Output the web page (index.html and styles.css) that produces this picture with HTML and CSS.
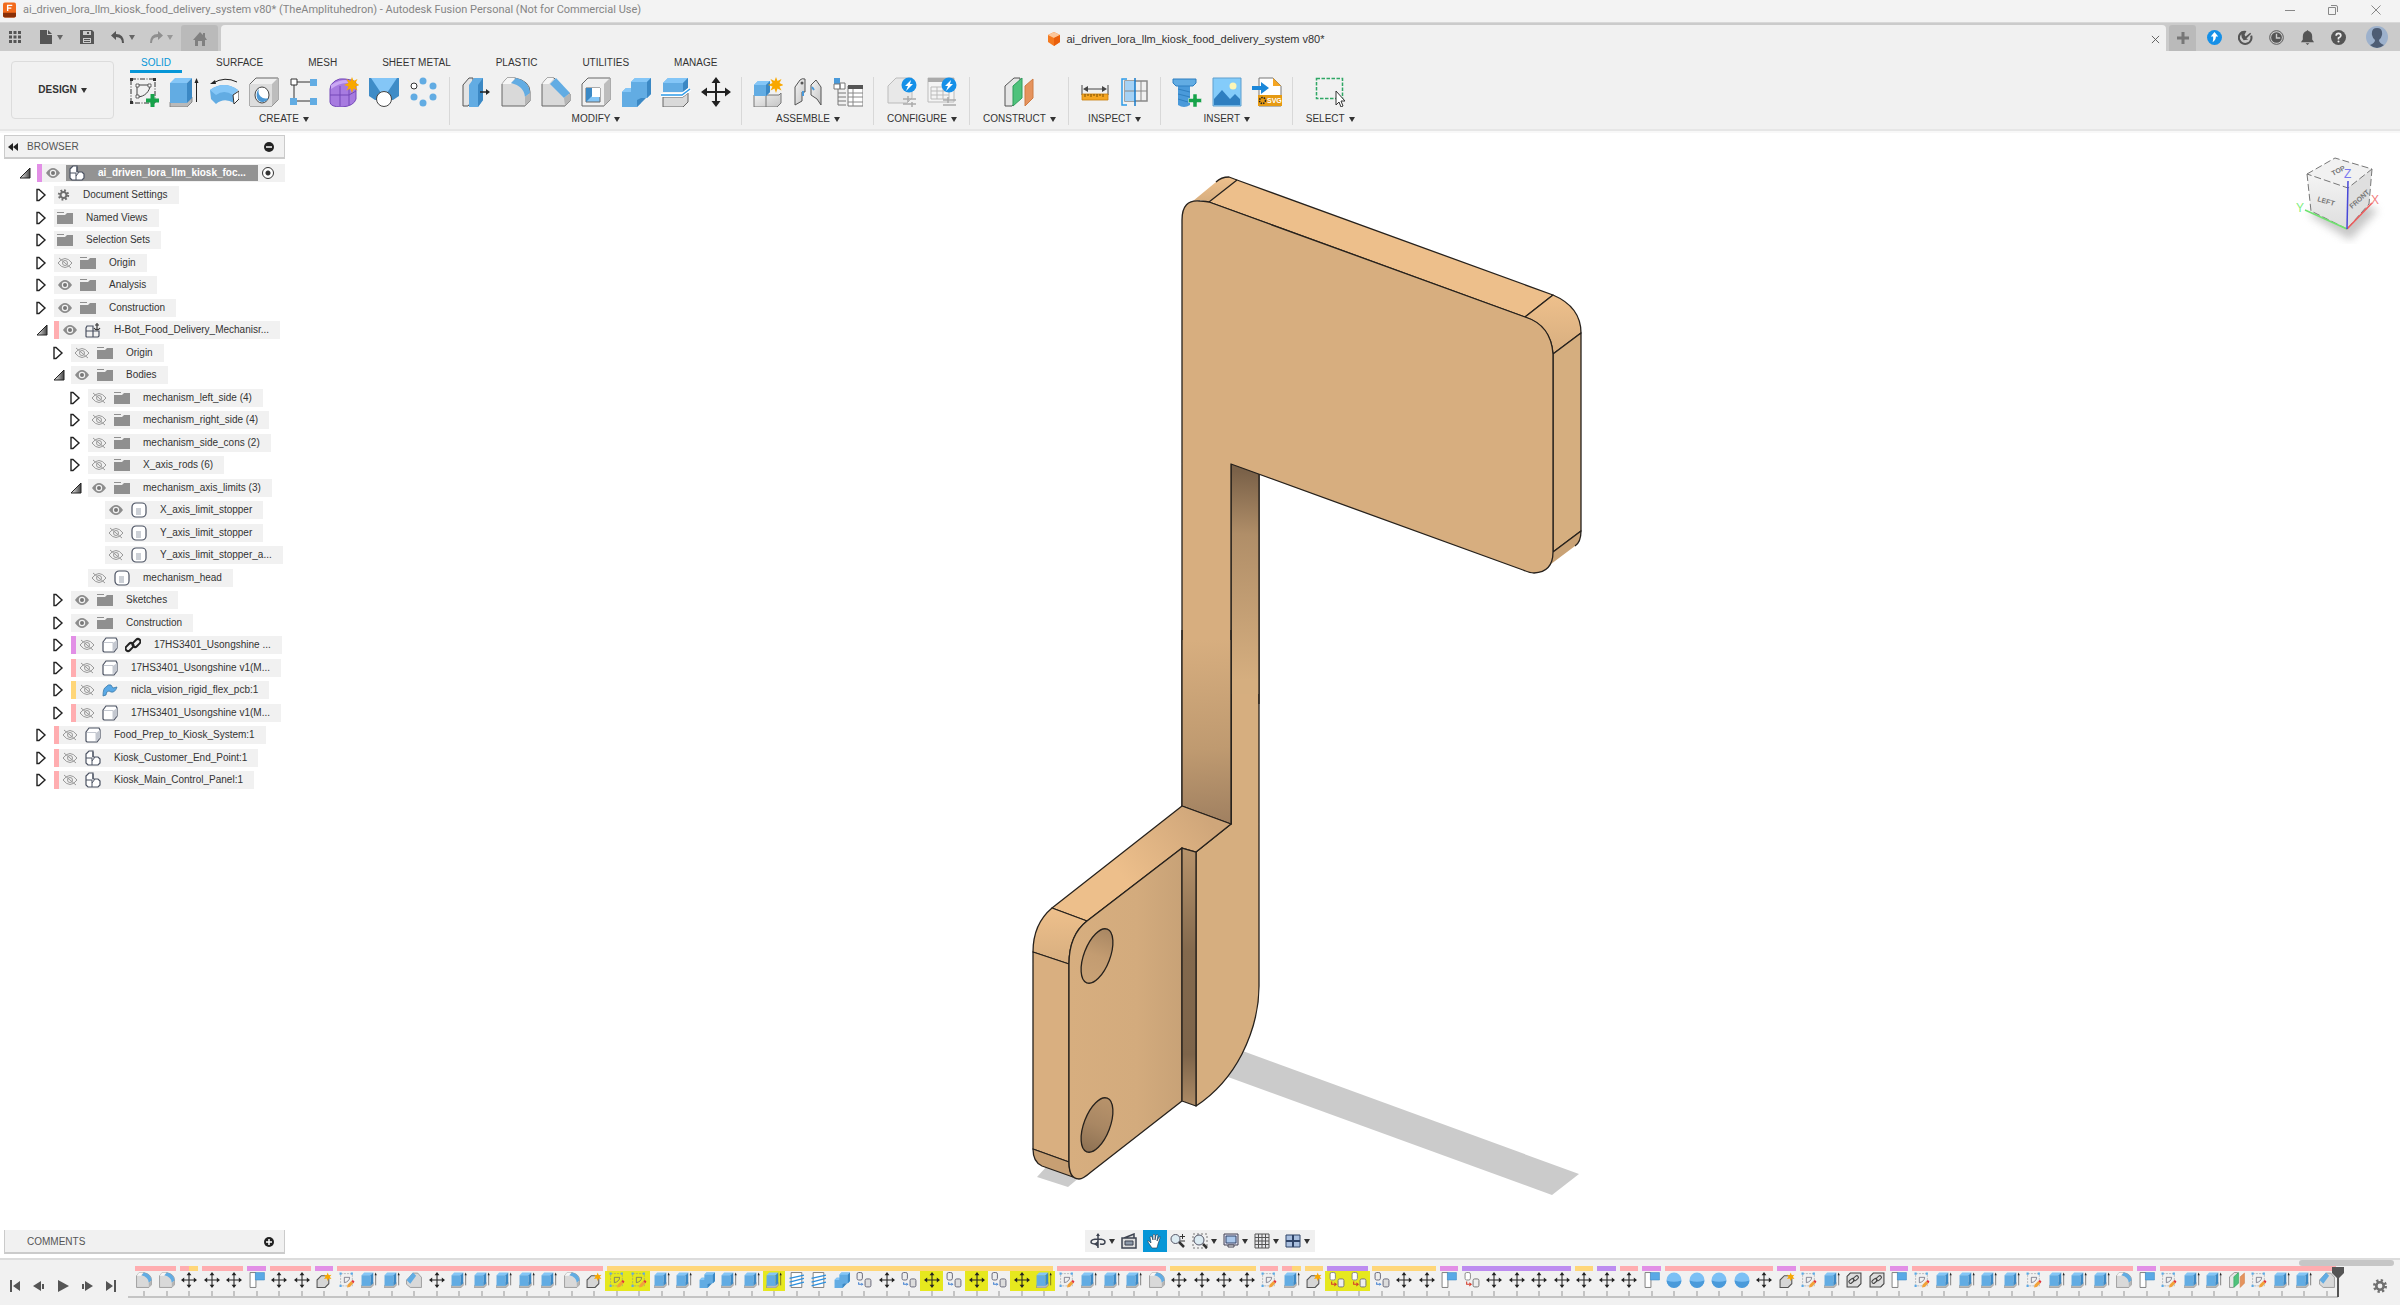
FILE: index.html
```html
<!DOCTYPE html>
<html lang="en">
<head>
	<meta charset="utf-8">
	<title>ai_driven_lora_llm_kiosk_food_delivery_system v80*</title>
	<link rel="stylesheet" href="styles.css">
</head>
<body>

<svg class="sprite" aria-hidden="true">
	<defs>
		<linearGradient id="gBlue" x1="0" y1="0" x2="1" y2="1"><stop offset="0" stop-color="#7dbdf0"/><stop offset="1" stop-color="#4a9ada"/></linearGradient>
		<linearGradient id="gGrey" x1="0" y1="0" x2="1" y2="1"><stop offset="0" stop-color="#f4f4f4"/><stop offset="1" stop-color="#c4c4c4"/></linearGradient>
		<linearGradient id="gOpen" x1="0" y1="0" x2="1" y2="0"><stop offset="0" stop-color="#f4f4f4"/><stop offset="1" stop-color="#444"/></linearGradient>
	</defs>

	<!-- ribbon -->
	<symbol id="i-sketch" viewBox="0 0 30 30">
		<path d="M2 2h24v24H2z" fill="none" stroke="#333" stroke-width="1" stroke-dasharray="5 1.5 1 1.5"/>
		<path d="M1 1h3v3H1zM24 1h3v3h-3zM1 24h3v3H1z" fill="#333"/>
		<path d="M8 20V8h13c0 6-5 12-13 12z" fill="none" stroke="#444"/>
		<path d="M7 7h3v3H7zM19 7h3v3h-3zM7 18h3v3H7z" fill="#fff" stroke="#444" stroke-width=".8"/>
		<path d="M21.500 17h4v4.500H30v4h-4.500V30h-4v-4.500H17v-4h4.500z" fill="#16a34a"/>
	</symbol>
	<symbol id="i-sketchedit" viewBox="0 0 30 30">
		<path d="M3 3h22v23H3z" fill="none" stroke="#8a8f98" stroke-dasharray="4 2"/>
		<path d="M1 1h4v4H1zM22 1h4v4h-4zM1 24h4v4H1z" fill="#5aa9e6"/>
		<path d="M10 20V10h10c0 5-4 9-10 10z" fill="none" stroke="#667" stroke-width="1.400"/>
		<path d="M15 29l1-5 7-7 4 4-7 7z" fill="#f2a33a"/><path d="M23 17l3-2 3 3-2 3z" fill="#e0333c"/>
	</symbol>
	<symbol id="i-extrude" viewBox="0 0 30 30">
		<path d="M1 25l5-5h17v5l-5 5H1z" fill="#b9b9b9" stroke="#777" stroke-width=".8"/>
		<path d="M1 6l5-5h17l-5 5z" fill="#84c6f7"/><path d="M1 6h17v20H1z" fill="#62ace3"/><path d="M18 6l5-5v20l-5 5z" fill="#3b88c4"/>
		<path d="M27.500 25V4" stroke="#222" fill="none"/><path d="M25.500 6l2-5 2 5z" fill="#222"/>
	</symbol>
	<symbol id="i-revolve" viewBox="0 0 30 30">
		<path d="M1 13Q15 3 29 13l-5 5 1 8Q15 20 7 27l-5-5z" fill="#62ace3"/>
		<path d="M1 13Q15 3 29 13l-5 5Q15 12 7 18z" fill="#84c6f7"/>
		<path d="M24 18l6-4v8l-5 5z" fill="#fff" stroke="#333"/>
		<path d="M4 6Q16-1 28 5" fill="none" stroke="#222"/><path d="M1 7l5-4 1 4z" fill="#222"/>
	</symbol>
	<symbol id="i-hole" viewBox="0 0 30 30">
		<path d="M1 7l6-6h22v22l-6 6H1z" fill="#f0f0f0" stroke="#666"/><path d="M1 7h22v22H1z" fill="#ddd"/><path d="M23 7l6-6v22l-6 6z" fill="#bdbdbd"/>
		<ellipse cx="13" cy="18" rx="7" ry="8" fill="#fff" stroke="#444"/><path d="M10 12a7 7 0 0 0 9 9c0 2-3 4-6 4-6 0-7-10-3-13z" fill="#4c98d4"/>
	</symbol>
	<symbol id="i-rect" viewBox="0 0 30 30">
		<path d="M8 5h13M5 8v13M8 24h13" stroke="#333"/><path d="M2 2h6v6H2z" fill="#fff" stroke="#333"/>
		<path d="M21 2h7v7h-7zM1 21h7v7H1zM21 21h7v7h-7z" fill="#62ace3"/>
	</symbol>
	<symbol id="i-form" viewBox="0 0 30 30">
		<path d="M1 12q0-5 5-8 4-3 10-2 10 1 11 4v16q-2 7-14 8Q1 30 1 25z" fill="#a77be0" stroke="#7448b8"/>
		<path d="M2 8q8-5 15-5l3 3q-9-1-18 6z" fill="#caa8f3"/><path d="M1 18h19l7-4M11 9v20M20 8v20" fill="none" stroke="#7448b8"/>
		<path d="M23 0l1.500 4 4-2-2 4 4 2-4 1.500 2 4-4-2L23 16l-1.500-4.500-4 2 2-4L15 8l4.500-2-2-4 4 2z" fill="#f9a800"/>
	</symbol>
	<symbol id="i-loft" viewBox="0 0 30 30">
		<path d="M0 1h30v19l-7 3H7l-7-3z" fill="#f1f1f1"/><path d="M0 1h30v18l-6 4H6l-6-4z" fill="#3f8cc7"/><path d="M2 1h26L18 16h-6z" fill="#84c6f7"/><circle cx="15" cy="22" r="7.500" fill="#fff" stroke="#444"/>
	</symbol>
	<symbol id="i-circ" viewBox="0 0 30 30">
		<circle cx="5" cy="9" r="3" fill="#fff" stroke="#333"/><g fill="#62ace3"><circle cx="14" cy="4" r="3.500"/><circle cx="24" cy="9" r="3.500"/><circle cx="24" cy="20" r="3.500"/><circle cx="14" cy="26" r="3.500"/><circle cx="5" cy="20" r="3.500"/></g>
	</symbol>
	<symbol id="i-presspull" viewBox="0 0 30 30">
		<path d="M2 8l6-7h4v22l-5 6H2z" fill="#e4e4e4" stroke="#555"/><path d="M8 8l5-7h9v22l-5 7H8z" fill="#62ace3"/><path d="M17 8l5-7v22l-5 7z" fill="#3b88c4"/>
		<path d="M19 15h7" stroke="#222" stroke-width="1.500"/><path d="M25 12l4 3-4 3z" fill="#222"/>
	</symbol>
	<symbol id="i-fillet" viewBox="0 0 30 30">
		<path d="M1 29V7l5-6h8q15 3 15 14v9l-5 5z" fill="#d9d9d9" stroke="#666"/><path d="M1 7l5-6h8l-4 6z" fill="#f6f6f6"/>
		<path d="M10 6l5-5q13 3 14 15l-5 4Q23 9 10 6z" fill="#62ace3"/><path d="M24 20l5-4v8l-5 5z" fill="#b5b5b5"/>
	</symbol>
	<symbol id="i-chamfer" viewBox="0 0 30 30">
		<path d="M1 29V7l5-6h7l16 16v7l-5 5z" fill="#d9d9d9" stroke="#666"/><path d="M1 7l5-6h7l-5 6z" fill="#f6f6f6"/>
		<path d="M9 7l6-6 14 15-6 5z" fill="#62ace3"/><path d="M23 21l6-5v8l-5 5z" fill="#b5b5b5"/>
	</symbol>
	<symbol id="i-chamfer2" viewBox="0 0 30 30">
		<path d="M1 15L13 2h9l7 8v19H8l-7-6z" fill="#d9d9d9" stroke="#666"/><path d="M1 15L13 1l6 6L8 22z" fill="#62ace3"/>
	</symbol>
	<symbol id="i-shell" viewBox="0 0 30 30">
		<path d="M1 7l6-6h22v22l-6 6H1z" fill="#f0f0f0" stroke="#666"/><path d="M23 7l6-6v22l-6 6z" fill="#bdbdbd"/><path d="M5 11h14v14H5z" fill="#84c6f7" stroke="#666"/><path d="M5 11h6v8l-6 6z" fill="#3b88c4"/><path d="M11 11h8v9h-8z" fill="#fff"/>
	</symbol>
	<symbol id="i-combine" viewBox="0 0 30 30">
		<path d="M1 15l4-4h5V5l4-4h16v16l-4 4h-6v5l-4 4H1z" fill="#62ace3"/><path d="M10 5l4-4h16l-4 4zM1 15l4-4h5v4z" fill="#84c6f7"/><path d="M26 5l4-4v16l-4 4zM20 21h5l-5 5-4 4v-7z" fill="#3b88c4"/>
	</symbol>
	<symbol id="i-split" viewBox="0 0 30 30">
		<path d="M2 6l5-5h20v10l-5 4H2z" fill="#62ace3"/><path d="M2 6l5-5h20l-5 5z" fill="#84c6f7"/><path d="M22 6l5-5v10l-5 4z" fill="#3b88c4"/>
		<path d="M2 20h20l5-4v9l-5 5H2z" fill="#d9d9d9" stroke="#666"/><path d="M0 18h21l8-6" fill="none" stroke="#fff" stroke-width="4"/><path d="M0 18h21l8-6" fill="none" stroke="#2d9be8" stroke-width="1.500"/>
	</symbol>
	<symbol id="i-move" viewBox="0 0 30 30">
		<path d="M15 4v22M4 15h22" stroke="#222" stroke-width="2"/><path d="M15 0l4.500 6h-9zM15 30l4.500-6h-9zM0 15l6-4.500v9zM30 15l-6-4.500v9z" fill="#222"/>
	</symbol>
	<symbol id="i-newcomp" viewBox="0 0 30 30">
		<path d="M1 18h25l2-2v10l-4 4H1z" fill="url(#gGrey)" stroke="#777"/><path d="M13 18v12" stroke="#777"/>
		<path d="M1 8l4-4h12v11l-4 4H1z" fill="#62ace3"/><path d="M1 8l4-4h12l-4 4z" fill="#84c6f7"/><path d="M13 8l4-4v11l-4 4z" fill="#3b88c4"/>
		<path d="M23 0l1.500 4 4-2-2 4 4 2-4 1.500 2 4-4-2L23 16l-1.500-4.500-4 2 2-4L15 8l4.500-2-2-4 4 2z" fill="#f9a800"/>
	</symbol>
	<symbol id="i-jointr" viewBox="0 0 30 30">
		<path d="M2 28V10l5-7q2-2 5-1v13H9v9z" fill="url(#gGrey)" stroke="#555"/><path d="M28 28V10l-5-7-5 5v10l6 4z" fill="url(#gGrey)" stroke="#555"/>
		<circle cx="9" cy="6" r="1.500" fill="#555"/><path d="M10 14v5M19 10l2 3" stroke="#4a9ada" stroke-width="2"/>
	</symbol>
	<symbol id="i-bom" viewBox="0 0 30 30">
		<path d="M5 12v16h8M5 16h8M5 20h8M5 24h8" fill="none" stroke="#777"/><path d="M1 1h6v6H1z" fill="#4a9ada"/><path d="M1 7h6v5H1zM7 6h5v6H7z" fill="#fff" stroke="#777"/>
		<path d="M15 9h15v20H15z" fill="#fff" stroke="#777"/><path d="M15 8h15v4H15z" fill="#555"/><path d="M15 16h15M15 20h15M15 25h15M20 12v17" stroke="#888"/>
	</symbol>
	<symbol id="i-conf" viewBox="0 0 30 30">
		<path d="M1 9l8-8h16v20l-5 5H1z" fill="#e8e8e8" stroke="#bbb"/><path d="M16 22h13M16 27h13M21 19v6M25 25v5" stroke="#aaa" stroke-width="1.500"/>
		<circle cx="22" cy="8" r="7.500" fill="#1590e8"/><path d="M24 3l-6 6h3l-2 5 7-7h-3z" fill="#fff"/>
	</symbol>
	<symbol id="i-conftable" viewBox="0 0 30 30">
		<path d="M1 1h26v24H1z" fill="#f4f4f4" stroke="#bbb"/><path d="M1 1h26v4H1z" fill="#aaa"/><path d="M4 10h18v12H4zM4 14h18M4 18h18M10 10v12M16 10v12" fill="none" stroke="#bbb"/>
		<path d="M16 23h13M16 28h13M21 20v6" stroke="#aaa" stroke-width="1.500"/>
		<circle cx="22" cy="8" r="7.500" fill="#1590e8"/><path d="M24 3l-6 6h3l-2 5 7-7h-3z" fill="#fff"/>
	</symbol>
	<symbol id="i-plane" viewBox="0 0 30 30">
		<path d="M1 9l9-8h6v19l-8 9H1z" fill="#e6e6e6" stroke="#555"/><path d="M9 9l9-8v20l-9 8z" fill="#4fc27c" stroke="#2e9e5b"/><path d="M21 9l8-7v19l-8 8z" fill="#e5935d" stroke="#cf7a42"/>
	</symbol>
	<symbol id="i-measure" viewBox="0 0 30 30">
		<path d="M2 8v10M28 8v10" stroke="#444"/><path d="M5 12h20" stroke="#444"/><path d="M3 12l5-3v6zM27 12l-5-3v6z" fill="#444"/>
		<path d="M2 17h26v6H2z" fill="#f5a623" stroke="#c97f0a" stroke-width=".8"/><path d="M5 17v3M8 17v2M11 17v3M14 17v2M17 17v3M20 17v2M23 17v3" stroke="#7a4d00"/>
	</symbol>
	<symbol id="i-section" viewBox="0 0 30 30">
		<path d="M5 4h22v20H5z" fill="#f0f0f0" stroke="#888" stroke-width="1.500"/><path d="M5 4h10v20H5z" fill="#a5d2f5"/><path d="M5 14h22M21 4v20" stroke="#888"/>
		<path d="M7 2H2v26h5" fill="none" stroke="#2d9be8" stroke-width="1.500"/><path d="M15 1v28" stroke="#1478c8" stroke-width="1.500"/>
	</symbol>
	<symbol id="i-bolt" viewBox="0 0 30 30">
		<path d="M6 6h12v22q-6 4-12 0z" fill="#4a9ada"/><path d="M1 2h23v4l-3 3H4L1 6z" fill="#62ace3" stroke="#2f7fc0"/><path d="M6 12l12 3M6 17l12 3M6 22l10 3" stroke="#2f7fc0"/>
		<path d="M21 17h4v4.500h4.500v4H25V30h-4v-4.500h-4.500v-4H21z" fill="#16a34a" stroke="#f1f1f1" stroke-width=".5"/>
	</symbol>
	<symbol id="i-canvas" viewBox="0 0 30 30">
		<path d="M1 1h28v28H1z" fill="#84ccfa" stroke="#5f9fce"/><path d="M2 22l8-9 8 9 5-5 5 5v6H2z" fill="#2f7fc0"/><circle cx="21" cy="9" r="3.500" fill="#fdf6b8"/>
	</symbol>
	<symbol id="i-select" viewBox="0 0 30 30">
		<path d="M1.500 1.500h26v20h-26z" fill="none" stroke="#2fa765" stroke-width="1.500" stroke-dasharray="3.500 1.500"/><path d="M21 14v14l3-3 2 5 2-1-2-5h4z" fill="#fff" stroke="#333"/>
	</symbol>

	<!-- timeline only -->
	<symbol id="i-joint" viewBox="0 0 30 30"><path d="M2 1h11v28H2z" fill="#fff" stroke="#666" stroke-width="1.500"/><path d="M12 1h17v14H12z" fill="#5aa9e6" stroke="#3b88c4"/></symbol>
	<symbol id="i-comp" viewBox="0 0 30 30"><path d="M2 15l8-8h14v15l-7 7H2z" fill="#d6d6d6" stroke="#555" stroke-width="2"/><path d="M22 1l2 5 5-1-3 4 3 4-5-1-2 5-2-5-5 1 3-4-3-4 5 1z" fill="#f9a800"/></symbol>
	<symbol id="i-thread" viewBox="0 0 30 30"><path d="M4 1h20v28H4z" fill="#fff" stroke="#666" stroke-width="1.500"/><path d="M1 12l27-6M1 19l27-7M1 26l27-7" stroke="#2d8fdc" stroke-width="2.500"/></symbol>
	<symbol id="i-copy" viewBox="0 0 30 30"><rect x="2" y="1" width="10" height="14" rx="3" fill="#eee" stroke="#667" stroke-width="1.800"/><rect x="17" y="13" width="11" height="15" rx="3" fill="#ddd" stroke="#667" stroke-width="1.800"/><path d="M5 19v4h5" fill="none" stroke="#3f7fd0" stroke-width="2"/><path d="M10 20l4 3-4 3z" fill="#3f7fd0"/></symbol>
	<symbol id="i-copyred" viewBox="0 0 30 30"><rect x="2" y="1" width="10" height="14" rx="3" fill="#fff" stroke="#888" stroke-width="1.800"/><rect x="17" y="13" width="11" height="15" rx="3" fill="#eee" stroke="#777" stroke-width="1.800"/><path d="M5 18v5h5" fill="none" stroke="#d43a2a" stroke-width="2"/><path d="M10 19l5 4-5 4z" fill="#d43a2a"/></symbol>
	<symbol id="i-sphere" viewBox="0 0 30 30"><circle cx="15" cy="15" r="14" fill="#7cc0f5"/><path d="M1 16q14 5 28 0a14 14 0 0 1-28 0z" fill="#4a9ada"/></symbol>
	<symbol id="i-linkbox" viewBox="0 0 30 30"><path d="M2 8l6-6h20v20l-6 6H2z" fill="#ddd" stroke="#444" stroke-width="2"/><g fill="none" stroke="#444" stroke-width="2"><rect x="5" y="14" width="11" height="6" rx="3" transform="rotate(-40 10 17)"/><rect x="13" y="9" width="11" height="6" rx="3" transform="rotate(-40 18 12)"/></g></symbol>

	<!-- browser tree -->
	<symbol id="i-eye" viewBox="0 0 16 16"><path d="M1 8q7-10 14 0-7 10-14 0z" fill="#8c8c8c"/><circle cx="8" cy="8" r="3.200" fill="#f1f1f1"/><circle cx="8" cy="8" r="2" fill="#777"/></symbol>
	<symbol id="i-eyeoff" viewBox="0 0 16 16"><path d="M1 8q7-9 14 0-7 9-14 0z" fill="none" stroke="#999"/><circle cx="8" cy="8" r="2.500" fill="none" stroke="#999"/><path d="M2 3l12 10" stroke="#999"/></symbol>
	<symbol id="i-folder" viewBox="0 0 16 16"><path d="M0 5h8l2-2h6v11H0zM0 2h7v1H0z" fill="#8f8f8f"/></symbol>
	<symbol id="i-gear" viewBox="0 0 16 16"><circle cx="8" cy="8" r="5.500" fill="none" stroke="#707070" stroke-width="3" stroke-dasharray="2.160 2.160"/><circle cx="8" cy="8" r="3.700" fill="none" stroke="#707070" stroke-width="2.600"/></symbol>
	<symbol id="i-body" viewBox="0 0 16 16"><rect x="1" y="1" width="14" height="14" rx="4" fill="#fff" stroke="#4b5262" stroke-width="1.200"/><path d="M5 6h5v7H5z" fill="#ccd0d6"/></symbol>
	<symbol id="i-cube" viewBox="0 0 16 16"><path d="M1 5l3-4h10l1 2v8l-3 4H2l-1-1z" fill="#fff" stroke="#4b5262" stroke-width="1.200"/><path d="M11 6l4-3v8l-4 3z" fill="#c4c8d0"/><path d="M2 5.500h9V14" fill="none" stroke="#c4c8d0"/></symbol>
	<symbol id="i-asm" viewBox="0 0 16 16"><path d="M1 4l3-3h4v6h5l2 2v4l-2 2H3l-2-2z" fill="#fff" stroke="#4b5262" stroke-width="1.200"/><path d="M1 8h6v7M7 11l3-4M8 2v5" fill="none" stroke="#4b5262"/></symbol>
	<symbol id="i-anchor" viewBox="0 0 16 16"><path d="M2 4h6v11H2q-1 0-1-1V6zM8 9h6v5l-1 1H8M1 9h7" fill="none" stroke="#4b5262" stroke-width="1.200"/><path d="M12 1v7M10 3h4M9 6q3 4 6 0" fill="none" stroke="#333" stroke-width="1.200"/></symbol>
	<symbol id="i-link" viewBox="0 0 16 16"><g fill="none" stroke="#222" stroke-width="2"><rect x="0" y="7.500" width="9" height="5" rx="2.500" transform="rotate(-45 4.500 10)"/><rect x="7" y="3.500" width="9" height="5" rx="2.500" transform="rotate(-45 11.500 6)"/></g></symbol>
	<symbol id="i-pcb" viewBox="0 0 16 16"><path d="M1 14q0-8 3-9 2-3 5-2l2 3 4-1q-2 6-6 5L7 9q-3 0-3 4z" fill="#5aa9e6" stroke="#3878a8" stroke-width=".8"/></symbol>
	<symbol id="i-closed" viewBox="1 0 12 14"><path d="M2 1.500h2L10 7l-6 5.500H2z" fill="#fff" stroke="#222" stroke-width="1.400"/></symbol>
	<symbol id="i-open" viewBox="0 0 12 14"><path d="M1 12L11 2v10z" fill="url(#gOpen)" stroke="#222"/></symbol>
</svg>

<header class="titlebar">
	<svg class="app-icon" viewBox="0 0 14 16"><rect width="14" height="16" rx="2" fill="#f26a1b"/><path d="M0 11h14v3a2 2 0 0 1-2 2H2a2 2 0 0 1-2-2z" fill="#8a2f06"/><path d="M5 9V3h5M5 6h4" fill="none" stroke="#fff" stroke-width="1.500"/></svg>
	<h1>ai_driven_lora_llm_kiosk_food_delivery_system v80* (TheAmplituhedron) - Autodesk Fusion Personal (Not for Commercial Use)</h1>
	<div class="window-buttons">
		<button aria-label="Minimize"><svg viewBox="0 0 12 12"><path d="M1 6.500h10"/></svg></button>
		<button aria-label="Restore"><svg viewBox="0 0 12 12"><path d="M1.500 3.500h7v7h-7zM4 1.500h5q1.500 0 1.500 1.500v5"/></svg></button>
		<button aria-label="Close"><svg viewBox="0 0 12 12"><path d="M1.500 1.500l9 9M10.500 1.500l-9 9"/></svg></button>
	</div>
</header>

<div class="tabstrip">
	<div class="quick">
		<button aria-label="Data panel"><svg viewBox="0 0 14 14"><path d="M1 1h3v3H1zM5.500 1h3v3h-3zM10 1h3v3h-3zM1 5.500h3v3H1zM5.500 5.500h3v3h-3zM10 5.500h3v3h-3zM1 10h3v3H1zM5.500 10h3v3h-3zM10 10h3v3h-3z"/></svg></button>
		<button class="caret" aria-label="File"><svg viewBox="0 0 14 14"><path d="M1 0h7v5h5v9H1zM9 0l4 4H9z"/></svg></button>
		<button aria-label="Save"><svg viewBox="0 0 14 14"><path fill-rule="evenodd" d="M0 0h12l2 2v12H0zM3 1v4h8V1zM3 8v5h8V8zM7 2h2v2H7zM4 9h6v1H4zM4 11h6v1H4z"/></svg></button>
		<button class="caret" aria-label="Undo"><svg viewBox="0 0 14 14"><path d="M5 1v3q8 0 8 9h-2q0-6-6-6v3L0 5.500z"/></svg></button>
		<button class="caret redo" aria-label="Redo"><svg viewBox="0 0 14 14"><path d="M9 1v3Q1 4 1 13h2q0-6 6-6v3l5-4.500z"/></svg></button>
	</div>
	<button class="home" aria-label="Home"><svg viewBox="0 0 14 14"><path d="M7 0l3 3V1h2v4l2 3h-2v6H9V9H5v5H2V8H0z"/></svg></button>
	<div class="doc-tab">
		<svg viewBox="0 0 14 14"><path d="M7 0l6 3v7l-6 4-6-4V3z" fill="#f47a20"/><path d="M7 0l6 3-6 3-6-3z" fill="#fcc79b"/><path d="M7 6l6-3v7l-6 4z" fill="#ea5f0c"/></svg>
		<span>ai_driven_lora_llm_kiosk_food_delivery_system v80*</span>
		<button class="close" aria-label="Close tab"><svg viewBox="0 0 10 10"><path d="M1 1l8 8M9 1L1 9"/></svg></button>
	</div>
	<button class="new-tab" aria-label="New design"><svg viewBox="0 0 14 14"><path d="M7 1v12M1 7h12"/></svg></button>
	<div class="account">
		<button aria-label="Updates"><svg viewBox="0 0 16 16"><circle cx="8" cy="8" r="8" fill="#1590e8"/><path d="M8 2l4 5H9.500q0 4-3.500 6 1-3 .5-6H4z" fill="#fff"/></svg></button>
		<button aria-label="Extensions"><svg viewBox="0 0 16 16"><path d="M5 2a6.700 6.700 0 1 0 9 4" fill="none" stroke="#555" stroke-width="2.200"/><path d="M3 2q3-2 6-1L7 5l1 2 5-4 1 1-5 5 2 1-5 1-2-3z" fill="#555"/></svg></button>
		<button aria-label="Job status"><svg viewBox="0 0 16 16"><circle cx="8" cy="8" r="7.300" fill="none" stroke="#555"/><circle cx="8" cy="8" r="5.700" fill="#555"/><path d="M8 4v4.500h4" fill="none" stroke="#cbcbcb" stroke-width="1.500"/></svg></button>
		<button aria-label="Notifications"><svg viewBox="0 0 16 16"><path d="M8 0l1 1q4 1 4 6v3l2 3H1l2-3V7q0-5 4-6zM6 14h4l-2 2z" fill="#555"/></svg></button>
		<button aria-label="Help"><svg viewBox="0 0 16 16"><circle cx="8" cy="8" r="8" fill="#555"/><path d="M5.500 6q0-2.500 2.500-2.500T10.500 6Q10.500 7 8 8.500V10" fill="none" stroke="#eee" stroke-width="1.800"/><circle cx="8" cy="12.200" r="1.100" fill="#eee"/></svg></button>
		<button class="avatar" aria-label="Account"><svg viewBox="0 0 22 22"><circle cx="11" cy="11" r="11" fill="#9db1cc"/><path d="M11 2q6 0 5 7-1 4-3 5 0 3 5 5-7 6-14 0 5-2 5-5-2-1-3-5-1-7 5-7z" fill="#4e5d74"/></svg></button>
	</div>
</div>

<div class="ribbon">
	<button class="workspace caret">DESIGN</button>
	<div class="ribbon-main">
		<nav class="ribbon-tabs">
			<button class="active">SOLID</button>
			<button>SURFACE</button>
			<button>MESH</button>
			<button>SHEET METAL</button>
			<button>PLASTIC</button>
			<button>UTILITIES</button>
			<button>MANAGE</button>
		</nav>
		<div class="groups">
			<section>
				<div class="tools">
					<button aria-label="Create sketch"><svg><use href="#i-sketch"/></svg></button>
					<button aria-label="Extrude"><svg><use href="#i-extrude"/></svg></button>
					<button aria-label="Revolve"><svg><use href="#i-revolve"/></svg></button>
					<button aria-label="Hole"><svg><use href="#i-hole"/></svg></button>
					<button aria-label="Rectangular pattern"><svg><use href="#i-rect"/></svg></button>
					<button aria-label="Create form"><svg><use href="#i-form"/></svg></button>
					<button aria-label="Loft"><svg><use href="#i-loft"/></svg></button>
					<button aria-label="Circular pattern"><svg><use href="#i-circ"/></svg></button>
				</div>
				<button class="group-label caret">CREATE</button>
			</section>
			<section>
				<div class="tools">
					<button aria-label="Press pull"><svg><use href="#i-presspull"/></svg></button>
					<button aria-label="Fillet"><svg><use href="#i-fillet"/></svg></button>
					<button aria-label="Chamfer"><svg><use href="#i-chamfer"/></svg></button>
					<button aria-label="Shell"><svg><use href="#i-shell"/></svg></button>
					<button aria-label="Combine"><svg><use href="#i-combine"/></svg></button>
					<button aria-label="Split body"><svg><use href="#i-split"/></svg></button>
					<button aria-label="Move"><svg><use href="#i-move"/></svg></button>
				</div>
				<button class="group-label caret">MODIFY</button>
			</section>
			<section>
				<div class="tools">
					<button aria-label="New component"><svg><use href="#i-newcomp"/></svg></button>
					<button aria-label="Joint"><svg><use href="#i-jointr"/></svg></button>
					<button aria-label="Bill of materials"><svg><use href="#i-bom"/></svg></button>
				</div>
				<button class="group-label caret">ASSEMBLE</button>
			</section>
			<section>
				<div class="tools">
					<button aria-label="Configure"><svg><use href="#i-conf"/></svg></button>
					<button aria-label="Configuration table"><svg><use href="#i-conftable"/></svg></button>
				</div>
				<button class="group-label caret">CONFIGURE</button>
			</section>
			<section>
				<div class="tools">
					<button aria-label="Offset plane"><svg><use href="#i-plane"/></svg></button>
				</div>
				<button class="group-label caret">CONSTRUCT</button>
			</section>
			<section>
				<div class="tools">
					<button aria-label="Measure"><svg><use href="#i-measure"/></svg></button>
					<button aria-label="Section analysis"><svg><use href="#i-section"/></svg></button>
				</div>
				<button class="group-label caret">INSPECT</button>
			</section>
			<section>
				<div class="tools">
					<button aria-label="Insert fastener"><svg><use href="#i-bolt"/></svg></button>
					<button aria-label="Insert canvas"><svg><use href="#i-canvas"/></svg></button>
					<button aria-label="Insert SVG">
						<svg viewBox="0 0 30 30">
							<path d="M7 29V1h14l8 8v20z" fill="#fff" stroke="#777"/><path d="M21 1v8h8z" fill="#f5a623"/><path d="M6 18h24v11H6z" fill="#e69a12"/>
							<path d="M0 9h9V5l8 6-8 6v-4H0z" fill="#1b87d9"/><circle cx="10.500" cy="23.500" r="3" fill="none" stroke="#222" stroke-width="1.500" stroke-dasharray="1.500 1"/><text x="15" y="26" class="svg-tag">SVG</text>
						</svg>
					</button>
				</div>
				<button class="group-label caret">INSERT</button>
			</section>
			<section>
				<div class="tools">
					<button aria-label="Select"><svg><use href="#i-select"/></svg></button>
				</div>
				<button class="group-label caret">SELECT</button>
			</section>
		</div>
	</div>
</div>

<main class="viewport">
	<svg class="model" viewBox="0 131 2400 1127">
		<defs>
			<linearGradient id="mPost" gradientUnits="userSpaceOnUse" x1="1200" y1="640" x2="1212" y2="822"><stop offset="0" stop-color="#d7ae7f"/><stop offset=".6" stop-color="#bf9a70"/><stop offset="1" stop-color="#a18161"/></linearGradient>
			<linearGradient id="mUnder" gradientUnits="userSpaceOnUse" x1="1250" y1="472" x2="1238" y2="680"><stop offset="0" stop-color="#7b6249"/><stop offset=".3" stop-color="#b08e68"/><stop offset="1" stop-color="#d5ae7f"/></linearGradient>
			<linearGradient id="mTop" gradientUnits="userSpaceOnUse" x1="1205" y1="815" x2="1125" y2="880"><stop offset="0" stop-color="#cfa67a"/><stop offset="1" stop-color="#edbf8b"/></linearGradient>
			<linearGradient id="mNotch" x1="0" y1="0" x2="0" y2="1"><stop offset="0" stop-color="#b8946c"/><stop offset=".4" stop-color="#83694d"/><stop offset=".8" stop-color="#7d644a"/><stop offset="1" stop-color="#ae8c66"/></linearGradient>
			<linearGradient id="mFront" x1="0" y1="0" x2="1" y2="0"><stop offset="0" stop-color="#d7ae7f"/><stop offset=".6" stop-color="#d3ab7d"/><stop offset="1" stop-color="#c8a277"/></linearGradient>
			<linearGradient id="mCorner" x1="0" y1="0" x2="0" y2="1"><stop offset="0" stop-color="#eec08c"/><stop offset="1" stop-color="#d7ae7f"/></linearGradient>
			<linearGradient id="mHole" x1="0" y1="0" x2="0" y2="1"><stop offset="0" stop-color="#a98763"/><stop offset=".5" stop-color="#c39c71"/><stop offset="1" stop-color="#c9a276"/></linearGradient>
			<linearGradient id="mHole2" x1="0" y1="0" x2="0" y2="1"><stop offset="0" stop-color="#b8936b"/><stop offset=".5" stop-color="#a98763"/><stop offset="1" stop-color="#8d7153"/></linearGradient>
		</defs>
		<g fill="#cbcbcb">
			<path d="M1240 1050L1579 1174l-27 21-324-118z"/>
			<path d="M1037 1177l31 10 12-10-32-12z"/>
		</g>
		<g stroke="#26211c" stroke-width="1.300" stroke-linejoin="round">
			<!-- head -->
			<path d="M1193 201l23-19q5-5 13-5l8 3-28 22q-8-3-16-1z" fill="url(#mCorner)" stroke="none"/>
			<path d="M1216 182q5-5 13-5l8 3" fill="none"/>
			<path d="M1209 202l28-22 316 115-28 22z" fill="#edbf8b"/>
			<path d="M1525 317l28-22q28 12 28 38l-28 21q-2-28-28-37z" fill="url(#mCorner)"/>
			<path d="M1553 354l28-21v198l-28 21z" fill="#d5ae7f"/>
			<path d="M1553 552l28-21q0 11-6 15l-24 18z" fill="#c9a275" stroke="none"/>
			<path d="M1553 552l28-21q0 11-6 15" fill="none"/>
			<path d="M1231 464l28 10v512q0 34-17 68-17 33-46 52V852l35-28z" fill="#d6ae7f"/>
			<path d="M1231 464l28 10v220h-28z" fill="url(#mUnder)" stroke="none"/>
			<path d="M1231 824V464M1259 474v230" fill="none"/>
			<path d="M1182 806V220q0-21 18-19 2 0 9 1l316 115q26 8 28 37v198q0 20-19 21-4 0-11-3L1231 464v360z" fill="#d7ae7f"/>
			<path d="M1182 640h49v184l-49-18z" fill="url(#mPost)" stroke="none"/>
			<path d="M1182 630v176l49 18V630" fill="none"/>
			<!-- mounting block -->
			<path d="M1182 806l49 18-35 28-14-4-95 73-35-13z" fill="url(#mTop)"/>
			<path d="M1052 908l35 13q-18 14-18 43l-36-12q0-28 19-44z" fill="url(#mCorner)"/>
			<path d="M1033 952l36 12v198l-36-13z" fill="#d9af80"/>
			<path d="M1033 1149l36 13q0 10 4 15l-31-11q-9-4-9-17z" fill="#c79f73"/>
			<path d="M1087 921l95-73v253l-91 71q-8 7-12 7-10 0-10-17V964q0-29 18-43z" fill="url(#mFront)"/>
			<path d="M1182 848l14 4v254l-14-5z" fill="url(#mNotch)"/>
			<ellipse cx="1097" cy="956" rx="13" ry="28.700" transform="rotate(21 1097 956)" fill="url(#mHole)"/>
			<ellipse cx="1097" cy="1125" rx="13" ry="28.700" transform="rotate(21 1097 1125)" fill="url(#mHole2)"/>
		</g>
	</svg>

	<aside class="browser">
		<div class="panel-head">
			<svg viewBox="0 0 10 10"><path d="M5 1v8L0 5zM10 1v8L5 5z"/></svg>
			<h2>BROWSER</h2>
			<button aria-label="Minimize browser"><svg viewBox="0 0 10 10"><circle cx="5" cy="5" r="5"/><path d="M2 5h6" stroke="#fff" stroke-width="1.500"/></svg></button>
		</div>
		<ul class="tree" id="tree"></ul>
	</aside>

	<svg class="viewcube" viewBox="0 0 110 104">
		<defs>
			<linearGradient id="cLeft" x1="0" y1="0" x2="0" y2="1"><stop offset="0" stop-color="#f4f4f4"/><stop offset="1" stop-color="#dedede"/></linearGradient>
			<filter id="cBlur"><feGaussianBlur stdDeviation="4"/></filter>
		</defs>
		<path d="M18 66l42 26 28-30-30-10z" fill="#999" opacity=".55" filter="url(#cBlur)"/>
		<path d="M17 26l28-16 37 11-24 19z" fill="#f1f1f1"/><path d="M17 26l41 14-1 41-36-18z" fill="url(#cLeft)"/><path d="M58 40l24-19-3 35-22 25z" fill="#dfdfdf"/>
		<path d="M17 26l28-16 37 11-24 19zM17 26l4 37 36 18M82 21l-3 35-22 25" fill="none" stroke="#777" stroke-dasharray="7 3"/>
		<text class="face" transform="translate(27 53) rotate(17)">LEFT</text>
		<text class="face" transform="translate(62 61) rotate(-42)">FRONT</text>
		<text class="face" transform="translate(43 28) rotate(-27)">TOP</text>
		<path d="M15 62l42 19" stroke="#6fe36f" stroke-width="1.500"/><path d="M57 81l25-26" stroke="#ee5a5a" stroke-width="1.500"/><path d="M58 33l-1 48" stroke="#4848d8" stroke-width="1.500"/>
		<text class="axis y" x="6" y="64">Y</text><text class="axis z" x="54" y="30">Z</text><text class="axis x" x="81" y="56">X</text>
	</svg>

	<div class="panel-head comments">
		<h2>COMMENTS</h2>
		<button aria-label="Expand comments"><svg viewBox="0 0 10 10"><circle cx="5" cy="5" r="5"/><path d="M2 5h6M5 2v6" stroke="#fff" stroke-width="1.500"/></svg></button>
	</div>

	<div class="navbar">
		<button class="caret" aria-label="Orbit"><svg viewBox="0 0 16 16"><path d="M1 9q0-3 7-3t7 3-5 2M1 9q0 2 5 2M8 1v14" fill="none" stroke="#3d4350" stroke-width="1.500"/><path d="M8 8l-4 3 4 3zM6 3l2-3 2 3z" fill="#3d4350"/></svg></button>
		<button aria-label="Look at"><svg viewBox="0 0 16 16"><path d="M1 5h14v10H1zM3 5l10-4v4" fill="#ddd" stroke="#3d4350" stroke-width="1.500"/><path d="M4 8h8v4H4z" fill="#8c98a8" stroke="#3d4350"/></svg></button>
		<button class="active" aria-label="Pan"><svg viewBox="0 0 16 16"><path d="M5 15L1 9q-1-2 1-1l2 2-1-6q1-2 2 0l1 3V2q1-2 2 0v5l1-5q2-1 2 0l-1 6 2-4q2-1 1 1l-2 6-1 4z" fill="#fff" stroke="#234" stroke-width=".6"/></svg></button>
		<button aria-label="Zoom"><svg viewBox="0 0 16 16"><circle cx="5.500" cy="6" r="4.500" fill="#dcebf2" stroke="#556"/><path d="M9 9l5 5" stroke="#333" stroke-width="2.500"/><path d="M10 3.500h5M12.500 1v5M10 8h5" stroke="#333"/></svg></button>
		<button class="caret" aria-label="Fit"><svg viewBox="0 0 16 16"><path d="M1 1h14v14H1z" fill="none" stroke="#777" stroke-dasharray="2 2"/><circle cx="7" cy="7" r="5" fill="#dcebf2" stroke="#556"/><path d="M11 11l4 4" stroke="#333" stroke-width="2.500"/></svg></button>
		<button class="caret" aria-label="Display settings"><svg viewBox="0 0 16 16"><path d="M1 1h14v11H1z" fill="#dde" stroke="#445"/><path d="M3 3h10v7H3z" fill="#a9c6ea" stroke="#346"/><path d="M5 12h6v2H5z" fill="#fff" stroke="#445"/></svg></button>
		<button class="caret" aria-label="Grid and snaps"><svg viewBox="0 0 16 16"><path d="M1 1h14v14H1zM4.500 1v14M8 1v14M11.500 1v14M1 4.500h14M1 8h14M1 11.500h14" fill="#e8e8ea" stroke="#555"/></svg></button>
		<button class="caret" aria-label="Viewports"><svg viewBox="0 0 16 16"><path d="M1 2h14v12H1z" fill="#a9bfdf" stroke="#2f4468"/><path d="M8 2v12M1 8h14" stroke="#2f4468" stroke-width="2"/></svg></button>
	</div>
</main>

<footer class="timeline">
	<div class="playback">
		<button aria-label="Go to start"><svg viewBox="0 0 12 12"><path d="M1 0h2v12H1zM11 1v10L4 6z"/></svg></button>
		<button aria-label="Step back"><svg viewBox="0 0 12 12"><path d="M8 1v10L0 6zM9 4h2v5H9z"/></svg></button>
		<button aria-label="Play"><svg viewBox="0 0 12 12"><path d="M1 0l11 6-11 6z"/></svg></button>
		<button aria-label="Step forward"><svg viewBox="0 0 12 12"><path d="M4 1v10l8-5zM1 4h2v5H1z"/></svg></button>
		<button aria-label="Go to end"><svg viewBox="0 0 12 12"><path d="M9 0h2v12H9zM1 1v10l7-5z"/></svg></button>
	</div>
	<div class="track">
		<ol class="features" id="features"></ol>
		<svg class="marker" viewBox="0 0 14 30"><path d="M1 0h12v6l-5 5v19H6V11L1 6z" fill="#555"/></svg>
	</div>
	<button class="settings" aria-label="Timeline settings"><svg><use href="#i-gear"/></svg></button>
	<div class="scroll-thumb"></div>
</footer>

<script src="script.js"></script>
</body>
</html>
```

FILE: styles.css
```css
* {
	box-sizing: border-box;
}
body {
	margin: 0;
	min-height: 100vh;
	display: flex;
	flex-direction: column;
	background: #fff;
	color: #333;
	font: 10px/14px "Liberation Sans", Arial, sans-serif;
}
h1, h2, ul, ol {
	margin: 0;
	padding: 0;
	font-size: inherit;
	font-weight: normal;
	list-style: none;
}
button {
	display: flex;
	align-items: center;
	justify-content: center;
	margin: 0;
	padding: 0;
	border: 0;
	background: none;
	color: inherit;
	font: inherit;
}
svg {
	display: block;
	flex: none;
}
.sprite {
	position: absolute;
	width: 0;
	height: 0;
}
.svg-tag {
	font: bold 7px "Liberation Sans", sans-serif;
	fill: #fff;
}
.caret::after {
	content: "";
	margin-left: 4px;
	border: 3px solid transparent;
	border-top: 5px solid #333;
	border-bottom: 0;
}

/* window title */
.titlebar {
	display: flex;
	align-items: center;
	height: 22px;
	padding: 0 18px 2px 3px;
	background: #f3f3f3;
	color: #858585;
}
.titlebar h1 {
	flex: 1;
	margin-left: 7px;
	font: 11px/16px Roboto, sans-serif;
}
.app-icon {
	width: 13px;
	height: 16px;
}
.window-buttons {
	display: flex;
	gap: 31px;
}
.window-buttons svg {
	width: 12px;
	height: 12px;
	fill: none;
	stroke: #888;
}

/* document tabs */
.tabstrip {
	display: flex;
	align-items: flex-end;
	height: 29px;
	background: #cbcbcb;
	border-top: 1px solid #d8d8d8;
}
.quick {
	display: flex;
	align-items: center;
	width: 181px;
	height: 28px;
	padding-left: 8px;
	gap: 17px;
}
.quick svg {
	width: 14px;
	height: 14px;
	fill: #555;
}
.quick .caret::after {
	border-top-color: #666;
}
.quick .redo {
	opacity: .5;
	margin-left: -3px;
}
.home {
	width: 37px;
	height: 26px;
	padding-top: 2px;
	border-radius: 3px 3px 0 0;
	background: #bababa;
}
.home svg {
	width: 14px;
	height: 14px;
	fill: #808080;
}
.doc-tab {
	flex: 1;
	display: flex;
	align-items: center;
	justify-content: center;
	height: 26px;
	margin-left: 3px;
	padding-top: 2px;
	border-radius: 4px 4px 0 0;
	background: #f1f1f1;
	font-size: 11px;
}
.doc-tab > svg {
	width: 14px;
	height: 14px;
	margin: 0 5px 0 auto;
}
.doc-tab .close {
	margin: 0 6px 0 auto;
}
.close svg {
	width: 9px;
	height: 9px;
	fill: none;
	stroke: #555;
}
.new-tab {
	width: 27px;
	height: 26px;
	margin-left: 3px;
	border-radius: 3px 3px 0 0;
	background: #bababa;
}
.new-tab svg {
	width: 14px;
	height: 14px;
	stroke: #777;
	stroke-width: 3;
}
.account {
	display: flex;
	align-items: center;
	height: 28px;
	gap: 16px;
	margin: 0 12px 0 11px;
}
.account svg {
	width: 15px;
	height: 15px;
}
.account .avatar {
	margin-left: 4px;
}
.account .avatar svg {
	width: 22px;
	height: 22px;
}

/* ribbon */
.ribbon {
	display: flex;
	height: 80px;
	background: #f1f1f1;
	border-bottom: 2px solid #e6e6e6;
	box-shadow: 0 2px #f8f8f8;
}
.workspace {
	width: 103px;
	height: 58px;
	margin: 10px 4px 0 11px;
	border: 1px solid #dcdcdc;
	border-radius: 4px;
	font-weight: bold;
}
.ribbon-tabs {
	display: flex;
	gap: 23px;
	height: 22px;
	padding-left: 12px;
}
.ribbon-tabs button {
	padding: 4px 11px 0;
	border-bottom: 3px solid transparent;
}
.ribbon-tabs .active {
	color: #0696d7;
	border-color: #0696d7;
}
.groups {
	display: flex;
	margin-top: 4px;
}
.groups section {
	height: 48px;
	padding: 0 5px 0 6px;
	border-right: 1px solid #d8d8d8;
}
.groups section:last-child {
	border: 0;
}
.tools {
	display: flex;
	justify-content: center;
}
.tools button {
	width: 40px;
}
.tools svg {
	width: 30px;
	height: 30px;
}
.group-label {
	width: 100%;
	margin-top: 5px;
	padding: 0 7px;
}

/* canvas: everything shares one cell and is aligned to an edge */
.viewport {
	flex: 1;
	display: grid;
	min-height: 0;
}
.viewport > * {
	grid-area: 1 / 1;
}
.model {
	width: 100%;
	height: 100%;
	min-height: 0;
}
.browser {
	align-self: start;
	justify-self: start;
	width: 281px;
	margin: 4px 0 0 4px;
}
.panel-head {
	display: flex;
	align-items: center;
	height: 24px;
	padding: 0 10px 0 3px;
	border: 1px solid #cbcbcb;
	border-bottom-width: 2px;
	background: #f1f1f1;
	color: #555;
}
.panel-head svg {
	width: 10px;
	height: 10px;
	fill: #222;
}
.panel-head h2 {
	flex: 1;
	margin-left: 9px;
}
.comments {
	align-self: end;
	justify-self: start;
	width: 281px;
	margin: 0 0 4px 4px;
	padding-top: 2px;
	padding-left: 13px;
	border-top: 0;
}

.tree {
	padding-top: 5px;
}
.tree li {
	display: flex;
	width: max-content;
	margin-bottom: 4px;
}
.tree li:nth-child(even) {
	margin-bottom: 5px;
}
.twist {
	width: 18px;
}
.twist svg {
	width: 12px;
	height: 14px;
	margin-right: 6px;
}
.level-0 { padding-left: 15px; }
.level-1 { padding-left: 32px; }
.level-2 { padding-left: 49px; }
.level-3 { padding-left: 66px; }
.level-4 { padding-left: 83px; }
.node {
	display: flex;
	align-items: center;
	height: 18px;
	padding-right: 11px;
	background: #f1f1f1;
}
.node svg {
	width: 16px;
	height: 16px;
}
.node .icon, .node .eye {
	margin-left: 3px;
}
.node .eye + .icon, .icon + .icon {
	margin-left: 7px;
}
.node .name {
	margin-left: 13px;
}
.node .gear {
	width: 13px;
}
.bar {
	align-self: stretch;
	width: 5px;
}
.root {
	display: flex;
	align-items: center;
	width: 192px;
	height: 16px;
	margin-left: 5px;
	background: #939393;
	color: #fff;
	font-weight: bold;
}
.radio {
	appearance: none;
	width: 12px;
	height: 12px;
	margin: 0 0 0 4px;
	border: 1px solid #333;
	border-radius: 50%;
	background: radial-gradient(#333 2px, #fff 3px);
}

.viewcube {
	align-self: start;
	justify-self: end;
	width: 110px;
	height: 104px;
	margin-top: 17px;
}
.face {
	font: bold 7px "Liberation Sans", sans-serif;
	fill: #777;
}
.axis {
	font: 12px "Liberation Sans", sans-serif;
}
.axis.x { fill: #f28080; }
.axis.y { fill: #7fee7f; }
.axis.z { fill: #7878f0; }

.navbar {
	align-self: end;
	justify-self: center;
	display: flex;
	height: 22px;
	margin-bottom: 6px;
	padding: 0 2px;
	background: #f0f0f0;
}
.navbar button {
	padding: 0 3px;
}
.navbar svg {
	width: 16px;
	height: 16px;
}
.navbar .caret::after {
	margin-left: 3px;
}
.navbar .active {
	margin-left: 3px;
	padding: 0 4px;
	background: #0696d7;
}

/* timeline */
.timeline {
	position: relative;
	display: flex;
	height: 47px;
	border-top: 2px solid #dcdcdc;
	background: #f1f1f1;
}
.playback {
	display: flex;
	align-items: center;
	gap: 12px;
	width: 128px;
	padding: 6px 0 0 9px;
}
.playback svg {
	width: 12px;
	height: 12px;
	fill: #555;
}
.track {
	flex: 1;
	display: flex;
	align-items: flex-start;
	padding-top: 6px;
}
.features {
	display: flex;
	height: 32px;
	padding-left: 5px;
	border-bottom: 2px solid #c4c4c4;
}
.group-bar {
	display: flex;
	height: 5px;
	margin: 0 2px;
}
.group-bar i {
	flex: 1;
}
.pink { background: #ffadb0; }
.yellow { background: #ffd678; }
.violet { background: #e28fe6; }
.purple { background: #bd8cf0; }
.group-items {
	display: flex;
}
.feature {
	flex-direction: column;
	justify-content: flex-start;
	width: 22px;
	height: 25px;
}
.feature.wide {
	width: 23px;
}
.feature svg {
	width: 16px;
	height: 16px;
	margin: 1px 0 3px;
}
.feature::after {
	content: "";
	width: 2px;
	height: 5px;
	background: #c4c4c4;
}
.feature.hot {
	background: linear-gradient(#e6e81e 20px, transparent 20px);
}
.marker {
	width: 14px;
	height: 30px;
	margin: 1px 0 0 -7px;
}
.settings {
	width: 40px;
	padding-top: 6px;
}
.settings svg {
	width: 16px;
	height: 16px;
}
/* lies over the top edge of the timeline */
.scroll-thumb {
	position: absolute;
	top: 0;
	right: 6px;
	width: 95px;
	height: 6px;
	border-radius: 3px;
	background: #c6c6c6;
}
```

FILE: script.js
```js
function icon(name, cls) {
	return '<svg class="' + (cls || '') + '"><use href="#i-' + name + '"/></svg>';
}

// level, twisty (open/closed/''), bar colour, eye (eye/eyeoff/''), icons, name
var nodes = [
	[1, 'closed', '', '', 'gear', 'Document Settings'],
	[1, 'closed', '', '', 'folder', 'Named Views'],
	[1, 'closed', '', '', 'folder', 'Selection Sets'],
	[1, 'closed', '', 'eyeoff', 'folder', 'Origin'],
	[1, 'closed', '', 'eye', 'folder', 'Analysis'],
	[1, 'closed', '', 'eye', 'folder', 'Construction'],
	[1, 'open', 'pink', 'eye', 'anchor', 'H-Bot_Food_Delivery_Mechanisr...'],
	[2, 'closed', '', 'eyeoff', 'folder', 'Origin'],
	[2, 'open', '', 'eye', 'folder', 'Bodies'],
	[3, 'closed', '', 'eyeoff', 'folder', 'mechanism_left_side (4)'],
	[3, 'closed', '', 'eyeoff', 'folder', 'mechanism_right_side (4)'],
	[3, 'closed', '', 'eyeoff', 'folder', 'mechanism_side_cons (2)'],
	[3, 'closed', '', 'eyeoff', 'folder', 'X_axis_rods (6)'],
	[3, 'open', '', 'eye', 'folder', 'mechanism_axis_limits (3)'],
	[4, '', '', 'eye', 'body', 'X_axis_limit_stopper'],
	[4, '', '', 'eyeoff', 'body', 'Y_axis_limit_stopper'],
	[4, '', '', 'eyeoff', 'body', 'Y_axis_limit_stopper_a...'],
	[3, '', '', 'eyeoff', 'body', 'mechanism_head'],
	[2, 'closed', '', 'eye', 'folder', 'Sketches'],
	[2, 'closed', '', 'eye', 'folder', 'Construction'],
	[2, 'closed', 'violet', 'eyeoff', 'cube link', '17HS3401_Usongshine ...'],
	[2, 'closed', 'pink', 'eyeoff', 'cube', '17HS3401_Usongshine v1(M...'],
	[2, 'closed', 'yellow', 'eyeoff', 'pcb', 'nicla_vision_rigid_flex_pcb:1'],
	[2, 'closed', 'pink', 'eyeoff', 'cube', '17HS3401_Usongshine v1(M...'],
	[1, 'closed', 'pink', 'eyeoff', 'cube', 'Food_Prep_to_Kiosk_System:1'],
	[1, 'closed', 'pink', 'eyeoff', 'asm', 'Kiosk_Customer_End_Point:1'],
	[1, 'closed', 'pink', 'eyeoff', 'asm', 'Kiosk_Main_Control_Panel:1']
];

function drawTree() {
	var out = '<li class="level-0"><button class="twist" aria-label="Collapse">' + icon('open') + '</button>' +
		'<div class="node"><span class="bar violet"></span>' + icon('eye', 'eye') +
		'<span class="root">' + icon('asm', 'icon') + '<span class="name">ai_driven_lora_llm_kiosk_foc...</span></span>' +
		'<input class="radio" type="radio" checked aria-label="Activate component"></div></li>';
	nodes.forEach(function (n) {
		out += '<li class="level-' + n[0] + '">';
		out += n[1] ? '<button class="twist" aria-label="Toggle">' + icon(n[1]) + '</button>' : '<span class="twist"></span>';
		out += '<div class="node">';
		if (n[2]) out += '<span class="bar ' + n[2] + '"></span>';
		if (n[3]) out += icon(n[3], 'eye');
		n[4].split(' ').forEach(function (i) { out += icon(i, 'icon ' + i); });
		out += '<span class="name">' + n[5] + '</span></div></li>';
	});
	document.getElementById('tree').innerHTML = out;
}

// bar colours, then the features under that bar; * marks a highlighted one
var groups = [
	['pink', 'fillet fillet'],
	['pink yellow', 'move'],
	['pink', 'move move'],
	['violet', 'joint'],
	['pink', 'move move'],
	['violet', 'comp'],
	['pink', 'sketchedit extrude extrude chamfer2 move extrude extrude extrude extrude extrude fillet comp'],
	['yellow', 'sketchedit* sketchedit* extrude extrude combine extrude extrude extrude* thread thread combine copy move copy move* copy move* copy move* extrude*'],
	['pink', 'sketchedit extrude extrude extrude fillet'],
	['yellow', 'move move move move'],
	['pink', 'sketchedit'],
	['pink yellow', 'extrude'],
	['yellow', 'comp'],
	['purple', 'copyred* copyred*'],
	['yellow', 'copy move move'],
	['violet', 'joint'],
	['purple', 'copyred move move move move'],
	['yellow', 'move'],
	['purple', 'move'],
	['pink', 'move'],
	['violet', 'joint'],
	['pink', 'sphere sphere sphere sphere move'],
	['violet', 'comp'],
	['pink', 'sketchedit extrude linkbox linkbox'],
	['violet', 'joint'],
	['pink', 'sketchedit extrude extrude extrude extrude sketchedit extrude extrude extrude fillet'],
	['violet', 'joint'],
	['pink', 'sketchedit extrude extrude plane sketchedit extrude extrude chamfer2']
];

function drawTimeline() {
	var out = '', count = 0;
	groups.forEach(function (g) {
		out += '<li><div class="group-bar">';
		g[0].split(' ').forEach(function (c) { out += '<i class="' + c + '"></i>'; });
		out += '</div><div class="group-items">';
		g[1].split(' ').forEach(function (f) {
			var name = f.replace('*', '');
			out += '<button class="feature' + (count % 2 ? ' wide' : '') + (name != f ? ' hot' : '') + '" aria-label="' + name + '">' + icon(name) + '</button>';
			count++;
		});
		out += '</div></li>';
	});
	document.getElementById('features').innerHTML = out;
}

drawTree();
drawTimeline();
```
